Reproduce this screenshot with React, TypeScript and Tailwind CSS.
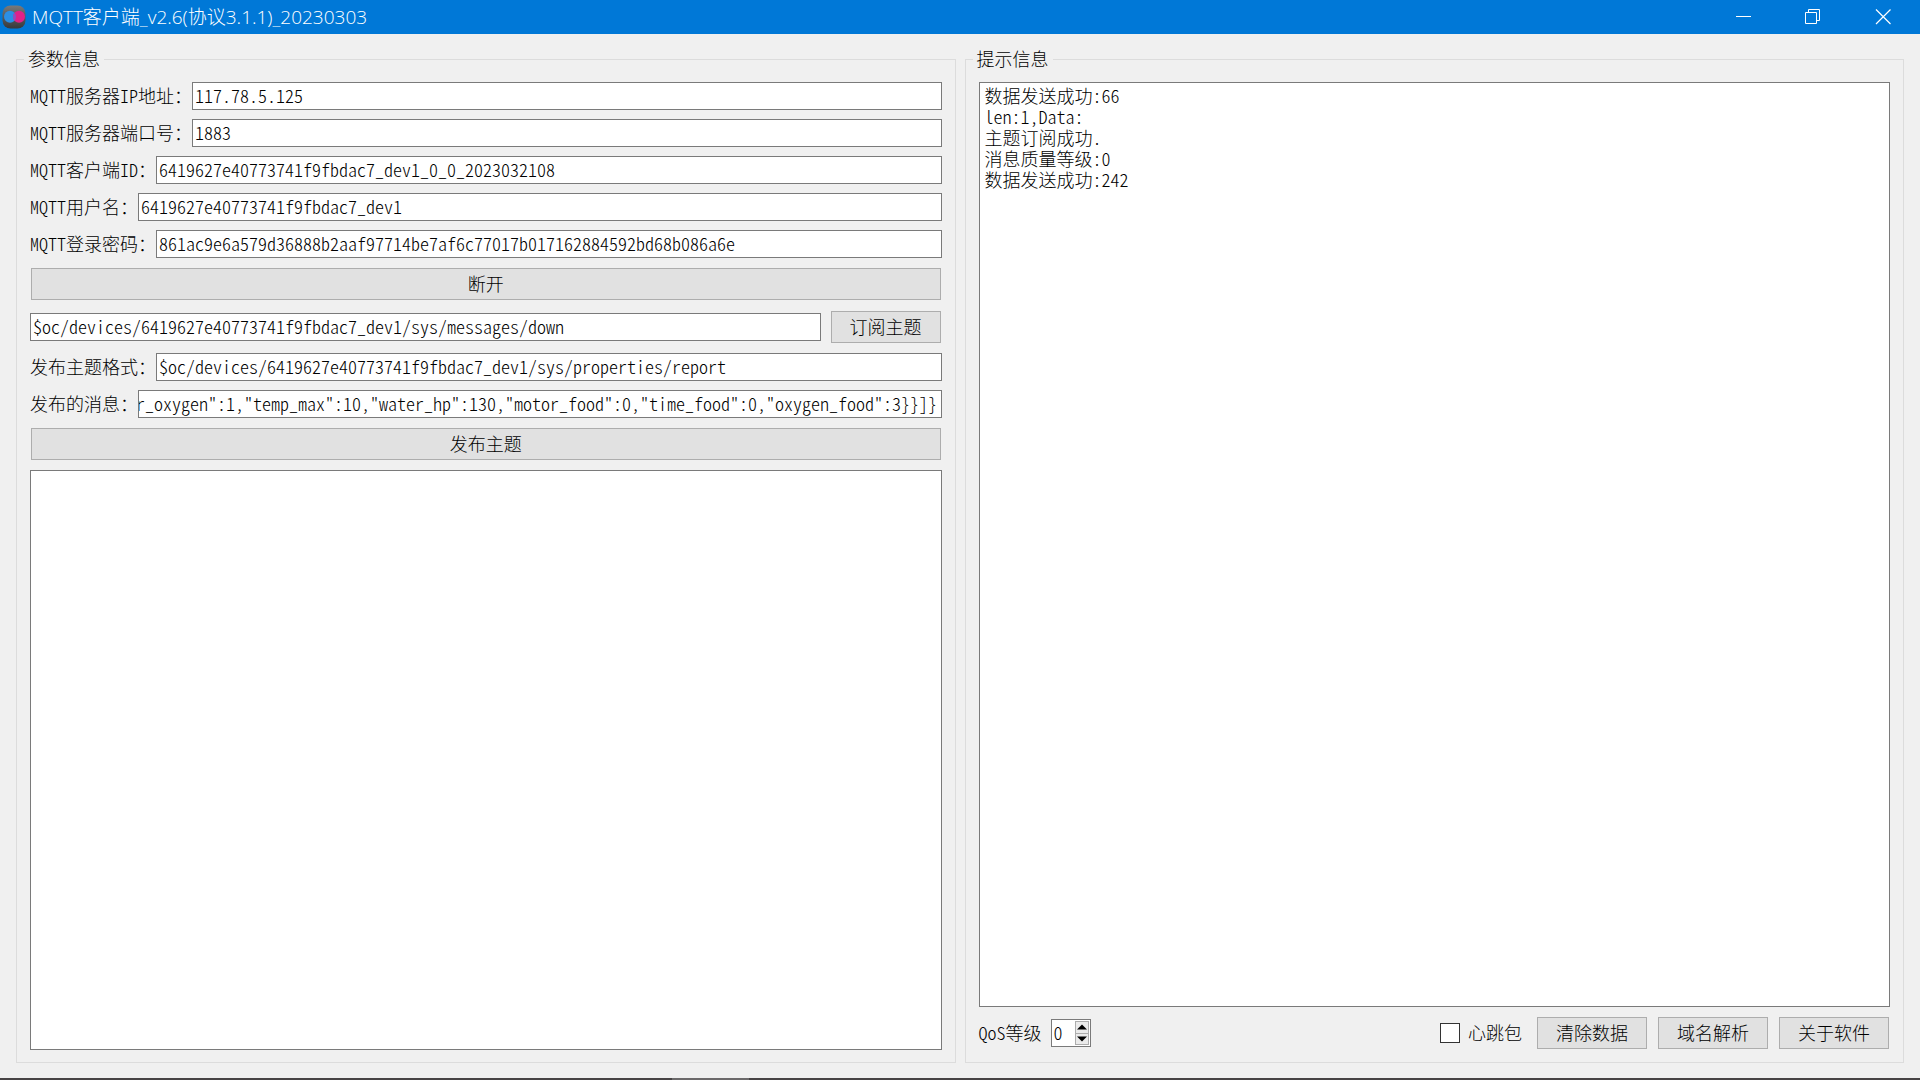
import { useEffect, useRef } from 'react';

const LOG = `数据发送成功:66
len:1,Data:
主题订阅成功.
消息质量等级:0
数据发送成功:242`;

const MESSAGE =
  '"motor_oxygen":1,"temp_max":10,"water_hp":130,"motor_food":0,"time_food":0,"oxygen_food":3}}]}';

const SERVER_FIELDS = [
  { id: 'ip', label: 'MQTT服务器IP地址：', value: '117.78.5.125' },
  { id: 'port', label: 'MQTT服务器端口号：', value: '1883' },
  { id: 'client', label: 'MQTT客户端ID：', value: '6419627e40773741f9fbdac7_dev1_0_0_2023032108' },
  { id: 'user', label: 'MQTT用户名：', value: '6419627e40773741f9fbdac7_dev1' },
  { id: 'password', label: 'MQTT登录密码：', value: '861ac9e6a579d36888b2aaf97714be7af6c77017b017162884592bd68b086a6e' },
];

const labelClass = 'shrink-0 pb-0.5 whitespace-nowrap';
const inputClass = 'h-7 min-w-0 flex-1 border border-[#7a7a7a] bg-white pb-0.5 pl-0.5 pr-1.5 outline-none';
const textareaClass = 'flex-1 resize-none border border-[#7a7a7a] bg-white px-[5px] py-0.5 outline-none';
const buttonClass = 'm-px h-8 border border-[#adadad] bg-[#e1e1e1] pb-0.5 hover:border-[#0078d7] hover:bg-[#e5f1fb]';

function Field({ id, label, value }: { id: string; label: string; value: string }) {
  return (
    <div className="flex items-center">
      <label htmlFor={id} className={labelClass}>{label}</label>
      <input id={id} type="text" defaultValue={value} className={inputClass} />
    </div>
  );
}

function AppIcon() {
  return (
    <svg viewBox="0 0 24 24" className="h-6 w-6" aria-hidden="true">
      <defs>
        <linearGradient id="plate" x1="0" y1="0" x2="0" y2="1">
          <stop offset="0" stopColor="#77797b" />
          <stop offset="1" stopColor="#37393b" />
        </linearGradient>
      </defs>
      <rect x="0.5" y="0.5" width="23" height="23" rx="8" fill="url(#plate)" />
      <circle cx="8" cy="11.8" r="6" fill="#2b8fe6" />
      <circle cx="17" cy="11.8" r="6" fill="#e0218a" />
      <path d="M12.5 7.8a6 6 0 0 1 0 8a6 6 0 0 1 0-8z" fill="#8d4fc0" />
    </svg>
  );
}

function TitleBar() {
  return (
    <header className="flex h-[34px] items-center bg-[#0078d7] px-0.5 text-white">
      <AppIcon />
      <h1 className="ml-1.5 flex-1 font-['Open_Sans','Noto_Sans_CJK_SC',sans-serif] text-[19px] leading-6">
        MQTT客户端_v2.6(协议3.1.1)_20230303
      </h1>
      <button type="button" aria-label="最小化" className="flex h-full w-[70px] items-center justify-center hover:bg-white/10">
        <svg viewBox="0 0 16 16" className="h-4 w-4" stroke="currentColor" fill="none">
          <path d="M1 7.5h15" />
        </svg>
      </button>
      <button type="button" aria-label="还原" className="flex h-full w-[70px] items-center justify-center hover:bg-white/10">
        <svg viewBox="0 0 16 16" className="h-4 w-4" stroke="currentColor" fill="none">
          <path d="M0.5 3.5h11v11h-11zM3.5 3.5v-3h11v11h-3" />
        </svg>
      </button>
      <button type="button" aria-label="关闭" className="flex h-full w-[70px] items-center justify-center hover:bg-[#e81123]">
        <svg viewBox="0 0 16 16" className="h-4 w-4" stroke="currentColor" strokeWidth="1.2" fill="none">
          <path d="M1 0.5l14.5 14.5M15.5 0.5L1 15" />
        </svg>
      </button>
    </header>
  );
}

function App() {
  const messageRef = useRef<HTMLInputElement>(null);
  const qosRef = useRef<HTMLInputElement>(null);

  // keep the end of the long payload in view
  useEffect(() => {
    if (messageRef.current) {
      messageRef.current.scrollLeft = messageRef.current.scrollWidth;
    }
  }, []);

  return (
    <div className="flex min-h-screen flex-col bg-[#f0f0f0] font-['Noto_Sans_CJK_SC',sans-serif] text-[18px] leading-[21px] font-light text-black [font-feature-settings:'hwid']">
      <TitleBar />

      <main className="grid flex-1 grid-cols-2 gap-[9px] px-4 pt-3.5 pb-[15px]">
        <fieldset className="flex min-w-0 flex-col border border-[#dcdcdc] px-[13px] pt-3 pb-3">
          <legend className="-ml-1.5 px-1 pb-0.5 leading-5">参数信息</legend>
          <div className="flex flex-1 flex-col gap-[9px]">
            {SERVER_FIELDS.map((field) => (
              <Field key={field.id} {...field} />
            ))}
            <button type="button" className={buttonClass}>断开</button>
            <div className="flex items-center gap-[9px]">
              <input
                type="text"
                aria-label="订阅主题"
                defaultValue="$oc/devices/6419627e40773741f9fbdac7_dev1/sys/messages/down"
                className={inputClass}
              />
              <button type="button" className={`${buttonClass} w-[110px]`}>订阅主题</button>
            </div>
            <Field
              id="topic"
              label="发布主题格式："
              value="$oc/devices/6419627e40773741f9fbdac7_dev1/sys/properties/report"
            />
            <div className="flex items-center">
              <label htmlFor="message" className={labelClass}>发布的消息：</label>
              <input
                id="message"
                ref={messageRef}
                type="text"
                defaultValue={MESSAGE}
                className="h-7 min-w-0 flex-1 border border-[#7a7a7a] bg-white pr-1 pb-0.5 outline-none"
              />
            </div>
            <button type="button" className={buttonClass}>发布主题</button>
            <textarea aria-label="收到的消息" className={textareaClass} />
          </div>
        </fieldset>

        <fieldset className="flex min-w-0 flex-col border border-[#dcdcdc] px-[13px] pt-3 pb-3">
          <legend className="-ml-1.5 px-1 pb-0.5 leading-5">提示信息</legend>
          <div className="flex flex-1 flex-col gap-[9px]">
            <textarea aria-label="提示信息" readOnly value={LOG} className={textareaClass} />
            <div className="flex items-center gap-[9px]">
              <label htmlFor="qos" className={labelClass}>QoS等级</label>
              <div className="flex h-7 w-10 border border-[#7a7a7a] bg-white p-px">
                <input
                  id="qos"
                  ref={qosRef}
                  type="number"
                  min={0}
                  max={2}
                  defaultValue={0}
                  className="w-0 min-w-0 flex-1 appearance-none pb-0.5 pl-px outline-none [-moz-appearance:textfield] [&::-webkit-inner-spin-button]:appearance-none"
                />
                <div className="flex w-3.5 flex-col border border-[#adadad] bg-[#ebebeb]">
                  <button
                    type="button"
                    aria-label="增加"
                    onClick={() => qosRef.current?.stepUp()}
                    className="flex flex-1 items-center justify-center border-b border-[#adadad]"
                  >
                    <svg viewBox="0 0 10 6" className="h-1.5 w-2.5"><path d="M0 5.5L5 0.5L10 5.5z" /></svg>
                  </button>
                  <button
                    type="button"
                    aria-label="减少"
                    onClick={() => qosRef.current?.stepDown()}
                    className="flex flex-1 items-center justify-center"
                  >
                    <svg viewBox="0 0 10 6" className="h-1.5 w-2.5"><path d="M0 0.5L5 5.5L10 0.5z" /></svg>
                  </button>
                </div>
              </div>
              <div className="mr-[5px] ml-auto flex items-center gap-2">
                <input
                  id="heartbeat"
                  type="checkbox"
                  className="h-5 w-5 appearance-none border border-[#333333] bg-white checked:bg-[#333333]"
                />
                <label htmlFor="heartbeat" className={labelClass}>心跳包</label>
              </div>
              <button type="button" className={`${buttonClass} w-[110px]`}>清除数据</button>
              <button type="button" className={`${buttonClass} w-[110px]`}>域名解析</button>
              <button type="button" className={`${buttonClass} w-[110px]`}>关于软件</button>
            </div>
          </div>
        </fieldset>
      </main>

      <footer className="flex h-0.5 bg-[#474445]">
        <div className="ml-[35%] w-[4%] bg-[#6b696a]" />
      </footer>
    </div>
  );
}

export default App;
